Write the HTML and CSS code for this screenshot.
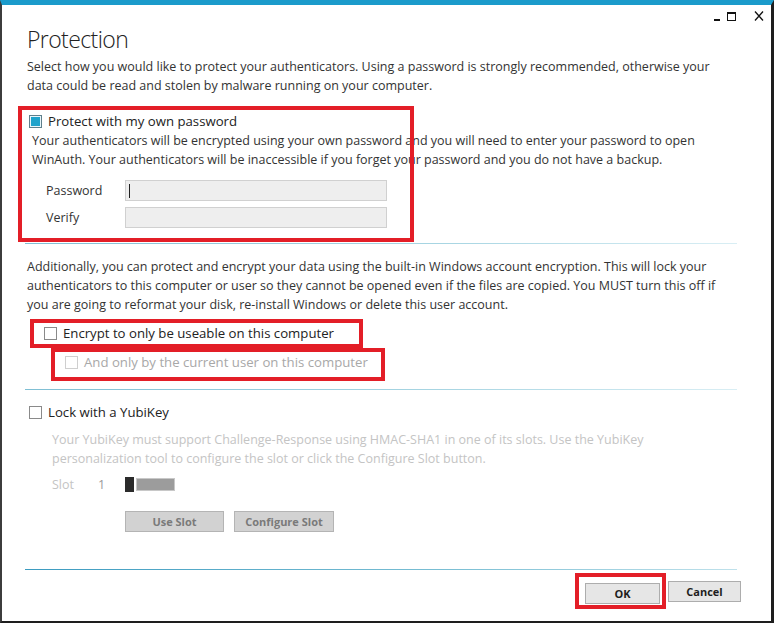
FILE: index.html
```html
<!DOCTYPE html>
<html lang="en">
<head>
  <meta charset="UTF-8" />
  <title>Protection</title>
  <link rel="stylesheet" href="styles.css">
</head>
<body>
  <div class="window">
    <div class="titlebar">
      <svg class="controls" width="52" height="20" viewBox="0 0 52 20">
        <rect x="1" y="14" width="6" height="2" fill="#111"/>
        <rect x="14.5" y="8.5" width="8" height="7" fill="none" stroke="#111" stroke-width="1"/>
        <rect x="14" y="7" width="9" height="2" fill="#111"/>
        <path d="M42 6.5 L50 15.5 M50 6.5 L42 15.5" fill="none" stroke="#111" stroke-width="1.3"/>
      </svg>
    </div>

    <h1>Protection</h1>
    <p class="intro">Select how you would like to protect your authenticators. Using a password is strongly recommended, otherwise your data could be read and stolen by malware running on your computer.</p>

    <!-- Password section -->
    <div class="pw-section">
      <label class="check-row">
        <span class="box checked"></span>
        <span>Protect with my own password</span>
      </label>
      <p class="desc">Your authenticators will be encrypted using your own password and you will need to enter your password to open WinAuth. Your authenticators will be inaccessible if you forget your password and you do not have a backup.</p>
      <div class="field">
        <span class="field-label">Password</span>
        <div class="input"><span class="caret"></span></div>
      </div>
      <div class="field second">
        <span class="field-label">Verify</span>
        <div class="input"></div>
      </div>
      <div class="mark mark-pw"></div>
    </div>

    <div class="sep"></div>

    <p class="para">Additionally, you can protect and encrypt your data using the built-in Windows account encryption. This will lock your authenticators to this computer or user so they cannot be opened even if the files are copied. You MUST turn this off if you are going to reformat your disk, re-install Windows or delete this user account.</p>

    <label class="check-row enc-row">
      <span class="box"></span>
      <span>Encrypt to only be useable on this computer</span>
      <span class="mark mark-enc"></span>
    </label>
    <label class="check-row sub-row disabled">
      <span class="box"></span>
      <span>And only by the current user on this computer</span>
      <span class="mark mark-sub"></span>
    </label>

    <div class="sep sep-mid"></div>

    <label class="check-row yubi-row">
      <span class="box"></span>
      <span>Lock with a YubiKey</span>
    </label>
    <p class="gray-desc">Your YubiKey must support Challenge-Response using HMAC-SHA1 in one of its slots. Use the YubiKey personalization tool to configure the slot or click the Configure Slot button.</p>

    <div class="slot-row">
      <span class="slot-label">Slot</span>
      <span class="slot-num">1</span>
      <div class="slider"><span class="thumb"></span><span class="track"></span></div>
    </div>

    <div class="btn-row">
      <button class="btn btn-off">Use Slot</button>
      <button class="btn btn-off wide">Configure Slot</button>
    </div>

    <div class="sep sep-bottom"></div>

    <div class="footer">
      <div class="ok-wrap">
        <button class="btn btn-ok">OK</button>
        <span class="mark mark-ok"></span>
      </div>
      <button class="btn btn-cancel">Cancel</button>
    </div>
  </div>
</body>
</html>
```

FILE: styles.css
```css
body {
  margin: 0;
  font-family: "Open Sans", "Noto Sans", sans-serif;
  background: #ffffff;
}
.window {
  position: relative;
  box-sizing: border-box;
  width: 774px;
  height: 623px;
  padding: 0 30px 0 25px;
  background: #ffffff;
  border-top: 5px solid #1b9bcb;
  border-left: 2px solid #3c3c3c;
  border-right: 3px solid #1e1e1e;
  border-bottom: 2px solid #1e1e1e;
}
.titlebar {
  height: 20px;
}
/* window chrome sits over the title strip */
.controls {
  position: absolute;
  top: 0;
  right: 6px;
  display: block;
}
h1 {
  margin: 0;
  font-size: 23px;
  line-height: 28px;
  font-weight: 300;
  color: #222;
  letter-spacing: -0.6px;
}
.intro, .desc, .para, .gray-desc {
  margin: 0 14px 0 0;
  font-size: 12.5px;
  line-height: 19px;
  color: #333;
}
.intro {
  margin-top: 4px;
}

/* checkboxes */
.check-row {
  position: relative;
  display: flex;
  align-items: center;
  gap: 6px;
  height: 20px;
  padding-left: 2px;
  font-size: 13.2px;
  color: #222;
}
.box {
  box-sizing: border-box;
  width: 13px;
  height: 13px;
  border: 1px solid #8a8a8a;
  background: #fff;
}
.box.checked {
  border-color: #5f7f8c;
  background: #1fa3cc;
  box-shadow: inset 0 0 0 1px #e8f6fb;
}
.disabled {
  color: #a8a8a8;
}
.disabled .box {
  border-color: #cfcfcf;
}

/* password section */
.pw-section {
  position: relative;
  margin-top: 16px;
}
.desc {
  padding-left: 5px;
}
.field {
  display: flex;
  align-items: center;
  margin-top: 11px;
  height: 21px;
}
.field.second {
  margin-top: 6px;
}
.field-label {
  width: 79px;
  padding-left: 19px;
  font-size: 12.5px;
  color: #333;
}
.input {
  box-sizing: border-box;
  display: flex;
  align-items: center;
  width: 262px;
  height: 21px;
  padding-left: 3px;
  background: #eeeeee;
  border: 1px solid #d0d0d0;
}
.caret {
  width: 1px;
  height: 14px;
  background: #222;
}

/* annotation marks */
.mark {
  position: absolute;
  box-sizing: border-box;
  border: 4px solid #e31e27;
  pointer-events: none;
}
.mark-pw {
  left: -9px;
  top: -5px;
  width: 396px;
  height: 136px;
}
.mark-enc {
  left: 3px;
  top: -4px;
  width: 333px;
  height: 29px;
}
.mark-sub {
  left: 24px;
  top: -4px;
  width: 334px;
  height: 33px;
}
.mark-ok {
  left: -10px;
  top: -8px;
  width: 91px;
  height: 36px;
}

/* separators */
.sep {
  height: 1px;
  margin: 15px 4px 0 -2px;
  background: linear-gradient(to right, #7fbfd4, #a9d6e3 60%, #d9eef4);
}
.sep-mid {
  margin-top: 17px;
}
.sep-bottom {
  margin-top: 37px;
  background: linear-gradient(to right, #3c9bc0, #7bbfd4 60%, #bfe1eb);
}

.para {
  margin-top: 13px;
}
.enc-row {
  margin-top: 9px;
  padding-left: 17px;
}
.sub-row {
  margin-top: 9px;
  padding-left: 38px;
}
.yubi-row {
  margin-top: 12px;
}
.gray-desc {
  margin-top: 8px;
  padding-left: 25px;
  color: #c4c4c4;
}

/* slot */
.slot-row {
  display: flex;
  align-items: center;
  height: 20px;
  margin-top: 6px;
  padding-left: 25px;
  font-size: 12.5px;
  color: #c4c4c4;
}
.slot-label {
  width: 46px;
}
.slot-num {
  width: 27px;
  color: #9a9a9a;
}
.slider {
  display: flex;
  align-items: center;
  width: 50px;
  height: 15px;
}
.thumb {
  width: 9px;
  height: 15px;
  background: #2b2b2b;
}
.track {
  box-sizing: border-box;
  width: 39px;
  height: 13px;
  margin-left: 2px;
  background: #9c9c9c;
  border: 1px solid #c8c8c8;
}

/* buttons */
.btn-row {
  display: flex;
  gap: 10px;
  margin-top: 17px;
  padding-left: 98px;
}
.btn {
  box-sizing: border-box;
  height: 21px;
  padding: 0;
  font-family: "Open Sans", "Noto Sans", sans-serif;
  font-size: 11px;
  font-weight: 700;
  border: 1px solid #adadad;
}
.btn-off {
  width: 99px;
  background: #d2d2d2;
  color: #7a7a7a;
  border-color: #b4b4b4;
}
.btn-off.wide {
  width: 100px;
}
.footer {
  display: flex;
  justify-content: flex-end;
  gap: 8px;
  margin-top: 11px;
}
.ok-wrap {
  position: relative;
}
.btn-ok, .btn-cancel {
  background: #e6e6e6;
  color: #1e1e1e;
}
.btn-ok {
  width: 75px;
}
.btn-cancel {
  width: 73px;
}
```
